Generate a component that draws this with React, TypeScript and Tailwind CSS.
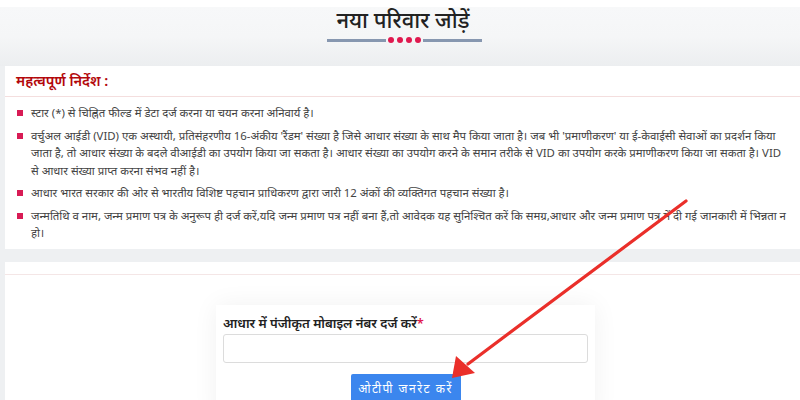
import React from 'react'

const FONT = '"Noto Sans", "Lohit Devanagari", "Liberation Sans", sans-serif'

// each instruction is split into the lines as they wrap in the original page
const instructions: string[][] = [
  ['स्टार (*) से चिह्नित फील्ड में डेटा दर्ज करना या चयन करना अनिवार्य है।'],
  [
    "वर्चुअल आईडी (VID) एक अस्थायी, प्रतिसंहरणीय 16-अंकीय 'रैंडम' संख्या है जिसे आधार संख्या के साथ मैप किया जाता है। जब भी 'प्रमाणीकरण' या ई-केवाईसी सेवाओं का प्रदर्शन किया",
    'जाता है, तो आधार संख्या के बदले वीआईडी का उपयोग किया जा सकता है। आधार संख्या का उपयोग करने के समान तरीके से VID का उपयोग करके प्रमाणीकरण किया जा सकता है। VID',
    'से आधार संख्या प्राप्त करना संभव नहीं है।',
  ],
  ['आधार भारत सरकार की ओर से भारतीय विशिष्ट पहचान प्राधिकरण द्वारा जारी 12 अंकों की व्यक्तिगत पहचान संख्या है।'],
  [
    'जन्मतिथि व नाम, जन्म प्रमाण पत्र के अनुरूप ही दर्ज करें,यदि जन्म प्रमाण पत्र नहीं बना हैं,तो आवेदक यह सुनिश्चित करें कि समग्र,आधार और जन्म प्रमाण पत्र में दी गई जानकारी में भिन्नता न',
    'हो।',
  ],
]

function TitleDivider() {
  return (
    <div className="flex items-center justify-center mt-[6px] ml-[8px]">
      <div className="w-[59px] h-[3px] bg-[#8797b0]" />
      <div className="flex gap-[3px] px-[2px]">
        {[0, 1, 2, 3].map((i) => (
          <span key={i} className="w-[6px] h-[6px] rounded-full bg-[#e0194f]" />
        ))}
      </div>
      <div className="w-[59px] h-[3px] bg-[#8797b0]" />
    </div>
  )
}

export default function App() {
  return (
    <div
      className="relative w-[800px] h-[400px] overflow-hidden bg-white"
      style={{ fontFamily: FONT }}
    >
      <div className="h-[7px] bg-white" />
      {/* header band */}
      <div className="h-[59px] bg-gradient-to-b from-[#f7f8f9] via-[#f5f6f7] to-[#eceef0]">
        <h1 className="text-center text-[22px] leading-[24px] text-[#222] font-medium ml-[6px]">
          नया परिवार जोड़ें
        </h1>
        <TitleDivider />
      </div>

      <div className="bg-[#eef0f2] pl-[5px]">
        {/* instruction card */}
        <div className="bg-white h-[183px]">
          <div className="h-[31px] border-b border-[#f4dede] px-[11px] pt-[4px]">
            <h2 className="text-[14.5px] leading-[20px] font-semibold text-[#b3070b]">
              महत्वपूर्ण निर्देश :
            </h2>
          </div>
          <ul className="pl-[12px] pt-[7px] text-[11.4px] leading-[17.5px] text-[#444]">
            {instructions.map((lines, i) => (
              <li key={i} className="flex mb-[5px]">
                <span className="w-[6px] h-[6px] mt-[6px] mr-[8px] shrink-0 bg-[#d81b55]" />
                <span className="flex flex-col">
                  {lines.map((l, j) => (
                    <span key={j} className="whitespace-nowrap">
                      {l}
                    </span>
                  ))}
                </span>
              </li>
            ))}
          </ul>
        </div>

        <div className="h-[13px] bg-[#eef0f2]" />

        {/* form section */}
        <div className="bg-white h-[200px]">
          <div className="h-[13px] border-b border-[#f4e6e6]" />
          <div className="flex justify-center pt-[30px]">
            <div className="w-[379px] ml-[6px] bg-white shadow-[0_0_24px_rgba(0,0,0,0.06)] px-[7px] pt-[8px] pb-4">
              <label className="block text-[13px] leading-[20px] font-semibold text-[#222]">
                आधार में पंजीकृत मोबाइल नंबर दर्ज करें<span className="text-[#e0194f]">*</span>
              </label>
              <input
                type="text"
                className="mt-[1px] block w-full h-[29px] border border-[#dcdcdc] rounded-[3px] bg-white outline-none"
              />
              <div className="flex justify-center mt-[11px]">
                <button className="h-[30px] w-[110px] bg-[#3b86ee] text-white text-[12px] tracking-[1.5px] rounded-[2px]">
                  ओटीपी जनरेट करें
                </button>
              </div>
            </div>
          </div>
        </div>
      </div>

      {/* annotation arrow */}
      <svg className="absolute left-0 top-0 pointer-events-none" width="800" height="400">
        <line x1="686" y1="201" x2="468" y2="364" stroke="#ea2f2a" strokeWidth="3.2" strokeLinecap="round" />
        <polygon points="452,378 456,356 475,373" fill="#ea2f2a" />
      </svg>
    </div>
  )
}
